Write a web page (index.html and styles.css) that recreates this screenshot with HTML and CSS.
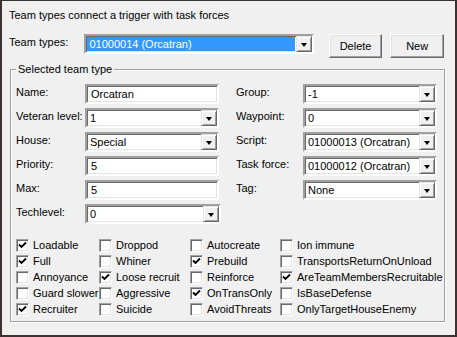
FILE: index.html
```html
<!DOCTYPE html>
<html lang="en">
<head>
  <meta charset="UTF-8">
  <title>Team types</title>
  <link rel="stylesheet" href="styles.css">
</head>
<body>
  <div class="window">
    <p class="intro">Team types connect a trigger with task forces</p>

    <div class="top-row">
      <span class="top-label">Team types:</span>
      <div class="combo combo-main">
        <span class="value"><span class="selected">01000014 (Orcatran)</span></span>
        <span class="drop"></span>
      </div>
      <button class="btn btn-delete">Delete</button>
      <button class="btn btn-new">New</button>
    </div>

    <!-- Selected team type -->
    <fieldset class="group">
      <legend>Selected team type</legend>
      <div class="fields">
        <div class="col col-left">
          <div class="row"><span class="lbl">Name:</span><div class="edit">Orcatran</div></div>
          <div class="row"><span class="lbl">Veteran level:</span><div class="combo"><span class="value">1</span><span class="drop"></span></div></div>
          <div class="row"><span class="lbl">House:</span><div class="combo"><span class="value">Special</span><span class="drop"></span></div></div>
          <div class="row"><span class="lbl">Priority:</span><div class="edit">5</div></div>
          <div class="row"><span class="lbl">Max:</span><div class="edit">5</div></div>
          <div class="row"><span class="lbl">Techlevel:</span><div class="combo combo-wide"><span class="value">0</span><span class="drop"></span></div></div>
        </div>
        <div class="col col-right">
          <div class="row"><span class="lbl">Group:</span><div class="combo"><span class="value">-1</span><span class="drop"></span></div></div>
          <div class="row"><span class="lbl">Waypoint:</span><div class="combo"><span class="value">0</span><span class="drop"></span></div></div>
          <div class="row"><span class="lbl">Script:</span><div class="combo"><span class="value">01000013 (Orcatran)</span><span class="drop"></span></div></div>
          <div class="row"><span class="lbl">Task force:</span><div class="combo"><span class="value">01000012 (Orcatran)</span><span class="drop"></span></div></div>
          <div class="row"><span class="lbl">Tag:</span><div class="combo"><span class="value">None</span><span class="drop"></span></div></div>
        </div>
      </div>

      <div class="checks" id="checks"></div>
    </fieldset>
  </div>

  <script>
    // flags in row order, true = checked
    const flags = [
      ["Loadable", true], ["Droppod", false], ["Autocreate", false], ["Ion immune", false],
      ["Full", true], ["Whiner", false], ["Prebuild", true], ["TransportsReturnOnUnload", false],
      ["Annoyance", false], ["Loose recruit", true], ["Reinforce", false], ["AreTeamMembersRecruitable", true],
      ["Guard slower", false], ["Aggressive", false], ["OnTransOnly", true], ["IsBaseDefense", false],
      ["Recruiter", true], ["Suicide", false], ["AvoidThreats", false], ["OnlyTargetHouseEnemy", false]
    ];

    const checks = document.getElementById("checks");
    flags.forEach(([name, on]) => {
      const item = document.createElement("div");
      item.className = "check";
      const box = document.createElement("span");
      box.className = "box";
      if (on) {
        box.innerHTML = '<svg width="9" height="9" viewBox="0 0 9 9"><path d="M1 3.5 L3.5 6 L8 1.5" fill="none" stroke="#000" stroke-width="1.9"/></svg>';
      }
      const text = document.createElement("span");
      text.textContent = name;
      item.appendChild(box);
      item.appendChild(text);
      checks.appendChild(item);
    });
  </script>
</body>
</html>
```

FILE: styles.css
```css
* {
  box-sizing: border-box;
}

body {
  margin: 0;
  font-family: "Liberation Sans", Arial, sans-serif;
  font-size: 11px;
  line-height: 13px;
  color: #000;
}

.window {
  width: 457px;
  height: 337px;
  background: #f0f0f0;
  border: 2px solid #3c3232;
  border-top-width: 1px;
  padding: 8px 11px 0 7px;
}

.intro {
  margin: 0;
}

.top-row {
  display: flex;
  align-items: flex-start;
  margin-top: 12px;
}

.top-label {
  width: 76px;
  padding-top: 2px;
}

.combo,
.edit {
  height: 20px;
  background: #fff;
  border: 2px solid;
  border-color: #a0a0a0 #fff #fff #a0a0a0;
  box-shadow: inset 1px 1px 0 #696969, inset -1px -1px 0 #e3e3e3;
}

.combo {
  display: flex;
  align-items: stretch;
}

.combo .value {
  flex: 1;
  padding: 2px 0 0 3px;
  white-space: nowrap;
  overflow: hidden;
}

.edit {
  padding: 2px 0 0 4px;
}

.combo-main {
  width: 231px;
}

.combo-main .value {
  padding: 1px 1px 1px 1px;
}

.selected {
  display: block;
  height: 100%;
  background: #3399ff;
  color: #fff;
  padding: 1px 0 0 2px;
}

.drop {
  width: 16px;
  background: #f0f0f0;
  border: 1px solid;
  border-color: #e3e3e3 #696969 #696969 #e3e3e3;
  box-shadow: inset 1px 1px 0 #fff, inset -1px -1px 0 #a0a0a0;
  display: flex;
  align-items: center;
  justify-content: center;
}

.drop::after {
  content: "";
  border-top: 4px solid #000;
  border-left: 3.5px solid transparent;
  border-right: 3.5px solid transparent;
  margin-top: 1px;
}

.btn {
  width: 54px;
  height: 24px;
  font: inherit;
  color: #000;
  background: #f0f0f0;
  border: 1px solid;
  border-color: #fff #696969 #696969 #fff;
  box-shadow: inset -1px -1px 0 #a0a0a0, inset 1px 1px 0 #e3e3e3;
  padding: 0;
}

.btn-delete {
  margin-left: 15px;
}

.btn-new {
  margin-left: 8px;
}

.group {
  margin: 5px 0 0 1px;
  width: 435px;
  height: 259px;
  border: 1px solid #a0a0a0;
  box-shadow: inset 1px 1px 0 #fff, 1px 1px 0 #fff;
  padding: 8px 0 0 5px;
}

.group legend {
  margin-left: 0;
  padding: 0 2px;
  background: #f0f0f0;
}

.fields {
  display: flex;
  gap: 15px;
}

.col {
  display: flex;
  flex-direction: column;
  gap: 4px;
}

.row {
  display: flex;
}

.col-left .lbl {
  width: 69px;
  padding-top: 2px;
}

.col-right .lbl {
  width: 67px;
  padding-top: 2px;
}

.row .combo,
.row .edit {
  width: 134px;
}

.row .combo-wide {
  width: 136px;
}

.checks {
  display: grid;
  grid-template-columns: 83px 91px 90px auto;
  row-gap: 3px;
  margin-top: 15px;
}

.check {
  display: flex;
  align-items: center;
  gap: 4px;
  white-space: nowrap;
  height: 13px;
}

.box {
  width: 13px;
  height: 13px;
  flex: none;
  background: #fff;
  border: 1px solid;
  border-color: #a0a0a0 #fff #fff #a0a0a0;
  box-shadow: inset 1px 1px 0 #696969, inset -1px -1px 0 #e3e3e3;
  display: flex;
  align-items: center;
  justify-content: center;
}
```
